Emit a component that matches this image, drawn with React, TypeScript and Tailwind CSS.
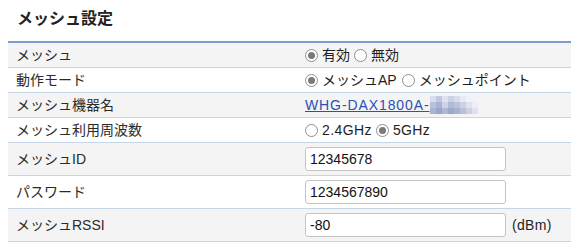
import React from "react";

const jp = '"Liberation Sans", "Noto Sans CJK JP", sans-serif';

function Radio({ checked }: { checked?: boolean }) {
  return (
    <span className="inline-flex h-[13px] w-[13px] shrink-0 items-center justify-center rounded-full border border-[#8f8f8f] bg-white">
      {checked && <span className="h-[7px] w-[7px] rounded-full bg-[#7a7a7a]" />}
    </span>
  );
}

function Row({
  label,
  gray,
  tall,
  children,
}: {
  label: string;
  gray?: boolean;
  tall?: boolean;
  children: React.ReactNode;
}) {
  return (
    <div
      className={`flex border-b border-[#c5d6e6] ${gray ? "bg-[#f4f4f4]" : "bg-white"} ${
        tall ? "h-[33px]" : "h-[25px]"
      }`}
    >
      <div className="flex w-[289px] items-center pl-2 text-[#2b2b2b]">{label}</div>
      <div className="flex items-center pl-2 text-[#1e1e1e]">{children}</div>
    </div>
  );
}

// blurred part of the device name
function Mosaic() {
  const cells = [
    ["#d9dcea", "#c2c8df", "#e0e3ee", "#ccd1e5", "#d9dcea", "#e8eaf3", "#f1f2f7", "#f3f4f8"],
    ["#b9c0da", "#a9b2d2", "#cfd3e5", "#b2b9d6", "#bcc2da", "#ccd1e4", "#e0e3ee", "#eceef5"],
    ["#aab3d3", "#9ba6cb", "#afb7d5", "#9ea8cc", "#a8b1d1", "#b8bfd9", "#cdd1e4", "#dfe2ee"],
  ];
  return (
    <svg width="48" height="18" viewBox="0 0 48 18" className="block">
      {cells.map((r, y) =>
        r.map((c, x) => <rect key={`${x}-${y}`} x={x * 6} y={y * 6} width="6" height="6" fill={c} />)
      )}
    </svg>
  );
}

function Field({ value }: { value: string }) {
  return (
    <input
      readOnly
      value={value}
      className="h-[24px] w-[201px] rounded-[3px] border border-[#c4c4c4] bg-white px-[4px] text-[14px] text-[#111] outline-none"
      style={{ fontFamily: jp }}
    />
  );
}

export default function App() {
  return (
    <main className="min-h-screen bg-white text-[14px]" style={{ fontFamily: jp }}>
      <h1 className="pl-[17px] pt-[7px] text-[16px] font-bold leading-[24px] text-[#222]">メッシュ設定</h1>

      <div className="ml-2 mt-[10px] border-t-2 border-[#7f9bcb]">
        <Row label="メッシュ" gray>
          <Radio checked />
          <span className="ml-[4px]">有効</span>
          <span className="ml-[4px]" />
          <Radio />
          <span className="ml-[4px]">無効</span>
        </Row>
        <Row label="動作モード">
          <Radio checked />
          <span className="ml-[4px]">メッシュAP</span>
          <span className="ml-[5px]" />
          <Radio />
          <span className="ml-[4px]">メッシュポイント</span>
        </Row>
        <Row label="メッシュ機器名" gray>
          <span className="tracking-[0.9px] text-[#2a4fb8] underline">WHG-DAX1800A-</span>
          <Mosaic />
        </Row>
        <Row label="メッシュ利用周波数">
          <Radio />
          <span className="ml-[4px] tracking-[0.4px]">2.4GHz</span>
          <span className="ml-[4px]" />
          <Radio checked />
          <span className="ml-[4px] tracking-[0.4px]">5GHz</span>
        </Row>
        <Row label="メッシュID" gray tall>
          <Field value="12345678" />
        </Row>
        <Row label="パスワード" tall>
          <Field value="1234567890" />
        </Row>
        <Row label="メッシュRSSI" gray tall>
          <Field value="-80" />
          <span className="ml-[6px] tracking-[0.3px]">(dBm)</span>
        </Row>
      </div>
    </main>
  );
}
